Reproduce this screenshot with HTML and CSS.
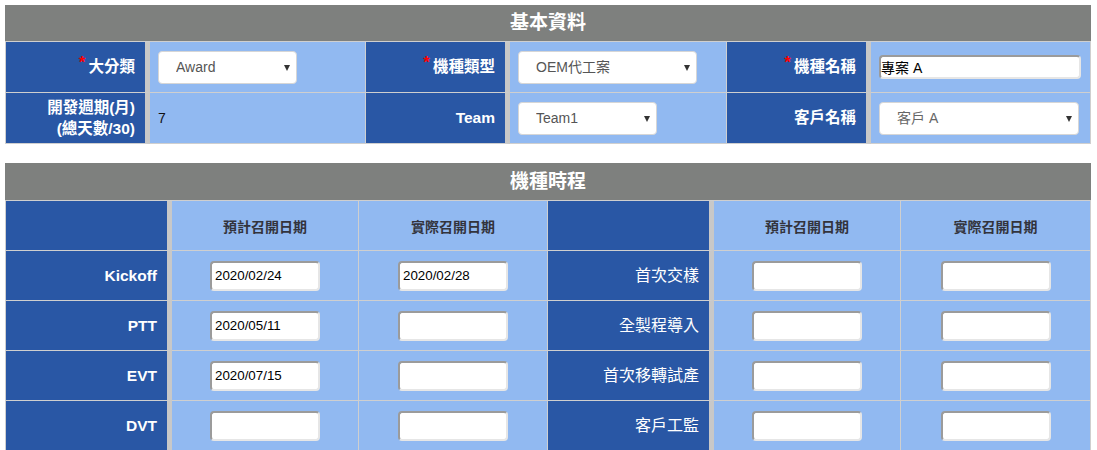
FILE: index.html
```html
<!DOCTYPE html>
<html lang="zh-Hant">
<head>
<meta charset="utf-8">
<title>機種資料</title>
<link rel="stylesheet" href="styles.css">
</head>
<body>
<section class="panel">
  <h2 class="panel-title">基本資料</h2>
  <div class="grid grid-basic">
    <div class="cell label"><span class="req">*</span>大分類</div>
    <div class="cell value">
      <div class="select-wrap sel-139"><select class="select"><option>Award</option></select></div>
    </div>
    <div class="cell label"><span class="req">*</span>機種類型</div>
    <div class="cell value">
      <div class="select-wrap sel-179"><select class="select"><option>OEM代工案</option></select></div>
    </div>
    <div class="cell label"><span class="req">*</span>機種名稱</div>
    <div class="cell value">
      <input class="text-input" type="text" value="專案 A">
    </div>

    <div class="cell label two-line">開發週期(月)<br>(總天數/30)</div>
    <div class="cell value plain">7</div>
    <div class="cell label">Team</div>
    <div class="cell value">
      <div class="select-wrap sel-139"><select class="select"><option>Team1</option></select></div>
    </div>
    <div class="cell label">客戶名稱</div>
    <div class="cell value">
      <div class="select-wrap sel-200"><select class="select muted"><option>客戶 A</option></select></div>
    </div>
  </div>
</section>

<section class="panel panel-schedule">
  <h2 class="panel-title title-schedule">機種時程</h2>
  <div class="grid grid-schedule">
    <div class="cell label"></div>
    <div class="cell value head">預計召開日期</div>
    <div class="cell value head">實際召開日期</div>
    <div class="cell label"></div>
    <div class="cell value head">預計召開日期</div>
    <div class="cell value head">實際召開日期</div>

    <div class="cell label">Kickoff</div>
    <div class="cell value center"><input class="date-input" type="text" value="2020/02/24"></div>
    <div class="cell value center"><input class="date-input" type="text" value="2020/02/28"></div>
    <div class="cell label ming">首次交樣</div>
    <div class="cell value center"><input class="date-input" type="text" value=""></div>
    <div class="cell value center"><input class="date-input" type="text" value=""></div>

    <div class="cell label">PTT</div>
    <div class="cell value center"><input class="date-input" type="text" value="2020/05/11"></div>
    <div class="cell value center"><input class="date-input" type="text" value=""></div>
    <div class="cell label ming">全製程導入</div>
    <div class="cell value center"><input class="date-input" type="text" value=""></div>
    <div class="cell value center"><input class="date-input" type="text" value=""></div>

    <div class="cell label">EVT</div>
    <div class="cell value center"><input class="date-input" type="text" value="2020/07/15"></div>
    <div class="cell value center"><input class="date-input" type="text" value=""></div>
    <div class="cell label ming">首次移轉試產</div>
    <div class="cell value center"><input class="date-input" type="text" value=""></div>
    <div class="cell value center"><input class="date-input" type="text" value=""></div>

    <div class="cell label">DVT</div>
    <div class="cell value center"><input class="date-input" type="text" value=""></div>
    <div class="cell value center"><input class="date-input" type="text" value=""></div>
    <div class="cell label ming">客戶工監</div>
    <div class="cell value center"><input class="date-input" type="text" value=""></div>
    <div class="cell value center"><input class="date-input" type="text" value=""></div>
  </div>
</section>
</body>
</html>
```

FILE: styles.css
```css
* {
  box-sizing: border-box;
}

body {
  margin: 5px;
  background: #ffffff;
  font-family: "Liberation Sans", "Noto Sans CJK TC", sans-serif;
  color: #000;
}

.panel {
  width: 1086px;
}

.panel-schedule {
  margin-top: 19px;
}

.panel-title {
  margin: 0;
  height: 37px;
  line-height: 36px;
  background: #7e807e;
  border-bottom: 1px solid #cfcfcf;
  color: #ffffff;
  font-size: 19px;
  font-weight: bold;
  text-align: center;
}

.title-schedule {
  height: 38px;
  line-height: 37px;
}

.grid {
  display: grid;
  border-left: 1px solid #cfcfcf;
}

.grid-basic {
  grid-template-columns: 144px 216px 144px 217px 144px 220px;
  grid-auto-rows: 51px;
}

.grid-schedule {
  grid-template-columns: 166px 187px 189px 166px 187px 190px;
  grid-auto-rows: 50px;
}

.cell {
  display: flex;
  align-items: center;
  border-right: 1px solid #cfcfcf;
  border-bottom: 1px solid #cfcfcf;
}

.label {
  justify-content: flex-end;
  padding-right: 10px;
  background: #2957a5;
  border-right: 5px solid #c8c8c8;
  color: #ffffff;
  font-size: 15.5px;
  font-weight: bold;
  line-height: 20px;
  text-align: right;
}

.label.ming {
  font-weight: normal;
  font-size: 16px;
}

.two-line {
  line-height: 21px;
}

.req {
  color: #ff0000;
  font-size: 17px;
  font-weight: bold;
  position: relative;
  top: -4px;
  margin-right: 3px;
}

.value {
  background: #91b9f1;
  padding-left: 8px;
}

.plain {
  font-size: 14px;
  color: #111;
}

.value.center {
  justify-content: center;
  padding-left: 0;
}

.value.head {
  justify-content: center;
  padding-left: 0;
  color: #33343d;
  font-size: 14px;
  font-weight: bold;
}

.select-wrap {
  position: relative;
  height: 33px;
}

.sel-139 {
  width: 139px;
}

.sel-179 {
  width: 179px;
}

.sel-200 {
  width: 200px;
}

.select-wrap::after {
  content: "";
  position: absolute;
  right: 7px;
  top: 14px;
  border-left: 3px solid transparent;
  border-right: 3px solid transparent;
  border-top: 6px solid #333;
  pointer-events: none;
}

.select {
  appearance: none;
  -webkit-appearance: none;
  width: 100%;
  height: 100%;
  margin: 0;
  padding: 0 20px 0 17px;
  background: #ffffff;
  border: 1px solid #d6d6d6;
  border-radius: 4px;
  font-family: "Liberation Sans", "Noto Sans CJK TC", sans-serif;
  font-size: 14px;
  color: #555;
}

.select.muted {
  color: #666;
}

.text-input {
  width: 202px;
  height: 24px;
  margin: 0;
  padding: 0;
  border: 2px solid;
  border-color: #9b9b9b #e6e6e6 #e6e6e6 #9b9b9b;
  border-radius: 4px;
  background: #ffffff;
  font-family: "Liberation Sans", "Noto Sans CJK TC", sans-serif;
  font-size: 14px;
  color: #000;
}

.date-input {
  width: 110px;
  height: 30px;
  margin: 0;
  padding: 0 3px;
  border: 2px solid;
  border-color: #9b9b9b #e6e6e6 #e6e6e6 #9b9b9b;
  border-radius: 4px;
  background: #ffffff;
  font-family: "Liberation Sans", sans-serif;
  font-size: 13.33px;
  color: #000;
}
```
